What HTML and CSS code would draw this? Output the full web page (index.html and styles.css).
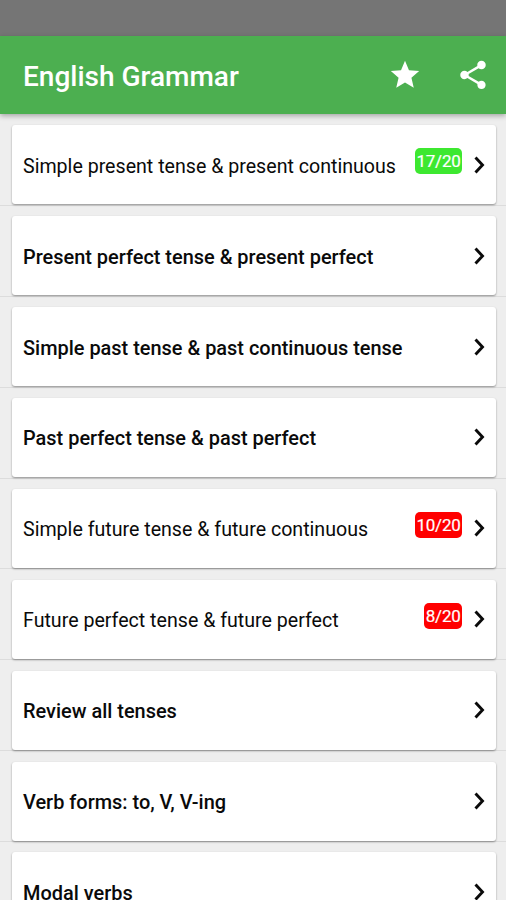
FILE: index.html
```html
<!DOCTYPE html>
<html lang="en">
<head>
<meta charset="utf-8">
<title>English Grammar</title>
<link rel="stylesheet" href="styles.css">
</head>
<body>
<div class="status"></div>
<header class="bar">
  <h1>English Grammar</h1>
  <svg class="star" viewBox="0 0 24 24"><path d="M12 17.27 18.18 21l-1.64-7.03L22 9.24l-7.19-.61L12 2 9.19 8.63 2 9.24l5.46 4.73L5.82 21z"/></svg>
  <svg class="share" viewBox="0 0 24 24"><path d="M18 16.08c-.76 0-1.44.3-1.96.77L8.91 12.7c.05-.23.09-.46.09-.7s-.04-.47-.09-.7l7.05-4.11c.54.5 1.25.81 2.04.81 1.66 0 3-1.34 3-3s-1.34-3-3-3-3 1.34-3 3c0 .24.04.47.09.7L8.04 9.81C7.5 9.31 6.79 9 6 9c-1.66 0-3 1.34-3 3s1.34 3 3 3c.79 0 1.5-.31 2.04-.81l7.12 4.16c-.05.21-.08.43-.08.65 0 1.61 1.31 2.92 2.92 2.92s2.92-1.31 2.92-2.92-1.31-2.92-2.92-2.92z"/></svg>
</header>
<main class="list">
  <div class="row"><div class="card read"><span class="label">Simple present tense &amp; present continuous</span><span class="score good">17/20</span><svg class="chev" viewBox="0 0 11 18"><path d="M1.5 1.5l7 7.5-7 7.5"/></svg></div></div>
  <div class="row"><div class="card"><span class="label">Present perfect tense &amp; present perfect</span><svg class="chev" viewBox="0 0 11 18"><path d="M1.5 1.5l7 7.5-7 7.5"/></svg></div></div>
  <div class="row"><div class="card"><span class="label">Simple past tense &amp; past continuous tense</span><svg class="chev" viewBox="0 0 11 18"><path d="M1.5 1.5l7 7.5-7 7.5"/></svg></div></div>
  <div class="row"><div class="card"><span class="label">Past perfect tense &amp; past perfect</span><svg class="chev" viewBox="0 0 11 18"><path d="M1.5 1.5l7 7.5-7 7.5"/></svg></div></div>
  <div class="row"><div class="card read"><span class="label">Simple future tense &amp; future continuous</span><span class="score bad">10/20</span><svg class="chev" viewBox="0 0 11 18"><path d="M1.5 1.5l7 7.5-7 7.5"/></svg></div></div>
  <div class="row"><div class="card read"><span class="label">Future perfect tense &amp; future perfect</span><span class="score bad">8/20</span><svg class="chev" viewBox="0 0 11 18"><path d="M1.5 1.5l7 7.5-7 7.5"/></svg></div></div>
  <div class="row"><div class="card"><span class="label">Review all tenses</span><svg class="chev" viewBox="0 0 11 18"><path d="M1.5 1.5l7 7.5-7 7.5"/></svg></div></div>
  <div class="row"><div class="card"><span class="label">Verb forms: to, V, V-ing</span><svg class="chev" viewBox="0 0 11 18"><path d="M1.5 1.5l7 7.5-7 7.5"/></svg></div></div>
  <div class="row"><div class="card"><span class="label">Modal verbs</span><svg class="chev" viewBox="0 0 11 18"><path d="M1.5 1.5l7 7.5-7 7.5"/></svg></div></div>
</main>
</body>
</html>
```
FILE: styles.css
```css
* { box-sizing: border-box; }
body { margin: 0; height: 900px; overflow: hidden; display: flex; flex-direction: column; background: #eee; font-family: Roboto, sans-serif; color: #0a0a0a; }
.status { height: 36px; flex: none; background: #757575; }
.bar { height: 78px; flex: none; display: flex; align-items: center; padding: 0 16px 0 23px; background: #4caf50; color: #fff; box-shadow: 0 2px 5px rgba(0,0,0,.3); }
.bar h1 { margin: 4px 0 0; flex: 1; font-size: 28px; line-height: 36px; font-weight: 500; }
.bar svg { width: 34px; height: 34px; fill: #fff; }
.star { margin-right: 34px; }
.list { flex: 1; min-height: 0; padding-top: 1px; }
.row { height: 90.9px; padding: 10.3px 10px 0 12px; border-bottom: 1px solid #dcdcdc; }
.card { height: 79px; display: flex; align-items: center; padding: 2px 11px 0 11px; background: #fff; border-radius: 3px; box-shadow: 0 1px 2px rgba(0,0,0,.4); }
.label { flex: 1; margin-top: 2px; white-space: nowrap; font-size: 19.93px; line-height: 26px; font-weight: 500; }
.read .label { font-size: 19.63px; font-weight: 400; }
.score { margin: -9px 12px 0 0; height: 26px; padding: 0 1.5px; border-radius: 5px; color: #fff; font-size: 17px; letter-spacing: -.25px; line-height: 27px; font-weight: 400; -webkit-text-stroke: .2px #fff; }
.good { background: #3de830; }
.bad { background: #f00; }
.chev { width: 11px; height: 18px; margin-top: -2px; fill: none; stroke: #0a0a0a; stroke-width: 2.9; }
```
